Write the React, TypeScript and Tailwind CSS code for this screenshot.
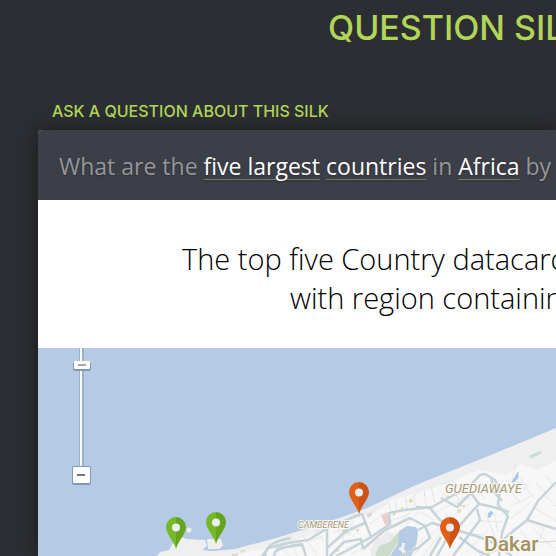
import type { ReactNode } from "react";

const ROADS = [
  "M262 556 L268 548 L288 543 L308 540 L328 528 L356 516 L362 514 L371 537 L390 524 L389 513 L404 510 L432 507 L450 497 L468 488 L480 475 L485 474 L495 480 L500 489 L498 505 L508 516 L502 533 L499 556",
  "M276 549 L302 544 L306 556 M327 528 L327 556 M327 548 L346 531 L365 523 M330 556 L344 542 L361 539 L363 549",
  "M336 556 L350 549 L371 537 M363 549 L385 530 L410 518 L425 526 L430 538 L418 548 L400 556",
  "M418 530 L432 523 L456 530 L476 536 L490 541 L512 556 M430 508 L440 520 L456 530 L468 516 L479 504 L493 507 L509 512",
  "M416 507 L430 508 M441 498 L457 507 L471 493 L479 504 M477 509 L480 520 L465 540 L453 556",
  "M437 556 L446 540 L452 531 M430 556 L441 537 M459 537 L478 551 L490 556 M499 543 L527 520 L538 501 L556 482 M527 520 L556 529 M491 477 L494 492 L502 501",
];

const MINOR_ROADS = [
  "M280 546 L290 556 M289 540 L298 556 M302 534 L318 556 M315 530 L325 543 M310 541 L323 536 M335 522 L343 540 M343 521 L350 536 M351 518 L358 534 M333 533 L352 524 M336 541 L355 529 M346 548 L358 544 M352 553 L369 546 M366 541 L374 556",
  "M366 514 L388 503 M370 524 L385 513 M389 503 L391 513 M395 500 L397 511 M405 496 L407 509 M414 493 L415 507 M424 489 L426 507 M431 486 L435 503 M390 521 L405 516 M397 526 L412 510 M406 525 L419 511 M382 545 L396 531",
  "M443 492 L451 505 M452 488 L461 503 M461 484 L470 500 M448 506 L467 496 M455 514 L469 504 M463 520 L475 507 M482 483 L493 490 M475 485 L485 500 M485 512 L494 535 M494 512 L498 532 M480 521 L502 522 M471 534 L495 536",
  "M510 490 L521 504 M520 478 L534 499 M506 480 L529 491 M513 505 L535 494 M510 519 L530 503 M512 529 L528 522 M536 483 L548 495 M545 475 L556 488 M533 507 L556 521 M544 495 L556 506 M534 529 L556 551 M544 526 L538 546 M520 530 L536 549",
  "M405 556 L425 536 M413 556 L438 527 M423 556 L444 529 M467 552 L488 530 M445 512 L450 526 M436 512 L449 506 M420 512 L434 520 M406 502 L420 491 M440 484 L456 481 M516 464 L512 480 L530 486",
];

function Pin({ x, y, light, dark }: { x: number; y: number; light: string; dark: string }) {
  return (
    <g transform={`translate(${x} ${y})`}>
      <path d="M0 0C-2-8-10-15-10-22A10 10 0 0 1 0-32Z" fill={light} />
      <path d="M0 0C2-8 10-15 10-22A10 10 0 0 0 0-32Z" fill={dark} />
      <circle cy="-21.5" r="4" fill="#e9edf5" />
    </g>
  );
}

function MapView() {
  return (
    <svg
      role="img"
      aria-label="Map of Dakar"
      viewBox="38 348 518 208"
      preserveAspectRatio="xMinYMin slice"
      className="block w-full"
    >
      <rect x="38" y="348" width="518" height="208" fill="#b4cae5" />
      <path d="M157 556L160 552L169 550L175 540L181 537L187 539L205 540L207 546L202 550L213 551L235 549L276 538L325 523L365 509L416 485L486 457L556 428V556Z" fill="#efeff0" />
      <path d="M208 540H220L222 545L219 548H209Z" fill="#efeff0" stroke="#efeff0" strokeWidth="2" />
      <circle cx="189" cy="530" r="2.5" fill="#efeff0" />
      <path d="M230 556L280 545L325 530L360 516L370 516L392 500L436 487L480 470L506 475L520 464L538 470L556 460V556Z" fill="#f7f7f7" />
      <path d="M373 543L388 531L397 537L386 555L370 556Z" fill="#ececee" />
      <path d="M375 556L379 546L390 542L397 533L403 532L398 543L389 556Z" fill="#c9ddc8" />
      <path d="M390 556L398 544L399 531L407 526L416 527L418 534L416 546L411 556Z" fill="#b4cae5" />
      <path d="M398 549l4-3 0-3 3 0-1 6 4 5-4 1-3-4z" fill="#eef2f3" />
      <path d="M381 515L387 512L391 524L385 525Z" fill="#edcccc" />
      <path d="M367 515l4-3 1 3-4 3z" fill="#d9d4cf" />
      <path d="M342 530l5-1 1 4-5 1z M457 503l4 0 1 3-4 1z" fill="#c8d8ac" />
      <path d="M232 554l6-1v3h-6z" fill="#ded8ce" />
      <path d="M240 552l5-2" stroke="#dce4b9" strokeWidth="2" />
      <g fill="#e8d8ac">
        <circle cx="376" cy="538" r="1.5" />
        <circle cx="358" cy="530" r="1.2" />
        <circle cx="337" cy="550" r="2" />
        <circle cx="394" cy="514" r="1.5" />
        <circle cx="411" cy="501" r="2" />
        <circle cx="402" cy="508" r="1" />
        <circle cx="459" cy="511" r="2" />
        <circle cx="464" cy="506" r="1.5" />
        <circle cx="425" cy="495" r="1" />
        <circle cx="448" cy="497" r="1.5" />
      </g>
      <g fill="none" stroke="#e5e7e9" strokeWidth="1">
        {MINOR_ROADS.map((d) => (
          <path key={d} d={d} />
        ))}
      </g>
      <g fill="none" stroke="#c6d4d9" strokeWidth="2.5" strokeLinejoin="round">
        {ROADS.map((d) => (
          <path key={d} d={d} />
        ))}
        <path d="M265 556C266 545 275 541 291 538M274 556C274 549 283 546 303 545" />
      </g>
      <path d="M530 457l5-2 6-3" fill="none" stroke="#c9d8d9" strokeWidth="3" />
      <path d="M512 482L518 472L518 478L514 482Z M488 514l3-3 2 2-4 5z M460 547l6-8 M416 528l2 4" fill="#a9c6eb" stroke="#a9c6eb" />
      <path d="M479 556L520 544L556 541" fill="none" stroke="#d3d3d3" strokeWidth="1" />

      <g fontFamily="Roboto, sans-serif" fill="#a89a72" stroke="#f8f8f6" paintOrder="stroke">
        <text x="298" y="528" fontSize="9" fontStyle="italic" strokeWidth="2">CAMBERENE</text>
        <text x="445" y="493" fontSize="13" fontStyle="italic" strokeWidth="2">GUEDIAWAYE</text>
        <text x="484" y="551" fontSize="21" fontWeight="500" fill="#a39160" strokeWidth="3">Dakar</text>
      </g>

      <Pin x={176} y={549} light="#75b925" dark="#65a51e" />
      <Pin x={216} y={544} light="#75b925" dark="#65a51e" />
      <Pin x={359} y={514} light="#e35f17" dark="#cd5118" />
      <Pin x={450} y={549} light="#e35f17" dark="#cd5118" />

      <rect x="79" y="348" width="5" height="120" fill="#9bb0c9" />
      <rect x="80" y="348" width="2" height="120" fill="#fff" />
      <rect x="73" y="362" width="18" height="9" rx="2" fill="#8096b5" />
      <rect x="74" y="361" width="16" height="8" rx="1" fill="#fff" />
      <rect x="78" y="364" width="8" height="2" fill="#a9a9a9" />
      <rect x="72" y="466" width="19" height="19" rx="2" fill="#8097bb" />
      <rect x="73" y="467" width="17" height="16" rx="1" fill="#fff" />
      <rect x="77" y="474" width="8" height="2" fill="#777" />
    </svg>
  );
}

function Term({ children }: { children: ReactNode }) {
  return (
    <a href="#" className="text-white underline decoration-[#6d8150] decoration-1 underline-offset-4">
      {children}
    </a>
  );
}

export default function App() {
  return (
    <main className="min-h-screen overflow-hidden whitespace-nowrap bg-[#2d2e33] font-['Open_Sans',sans-serif]">
      <h1 className="pl-82 pt-1.5 font-['Inter',sans-serif] text-[34px] font-medium leading-11 text-[#b0d557]">QUESTION SILK</h1>
      <h2 className="mt-[51px] pl-13 font-['Inter',sans-serif] text-[16px] font-medium leading-5 text-[#b0d557]">
        ASK A QUESTION ABOUT THIS SILK
      </h2>
      <section className="ml-9.5 mt-[9px] rounded-tl bg-white shadow-[0_0_20px_rgba(0,0,0,0.45)]">
        <p className="rounded-tl bg-[#3d3f48] pb-[5px] pl-[21px] pt-[7px] text-[23px] leading-14.5 text-[#95969a] [text-shadow:0_1px_2px_rgba(0,0,0,0.3)]">
          What are the <Term>five largest</Term> <Term>countries</Term> in <Term>Africa</Term> by
        </p>
        <div className="pb-[31px] pl-36 pt-[39px] text-[29px] font-light leading-[39px] text-black">
          <p>The top five Country datacards</p>
          <p className="pl-27">with region containing</p>
        </div>
        <MapView />
      </section>
    </main>
  );
}
